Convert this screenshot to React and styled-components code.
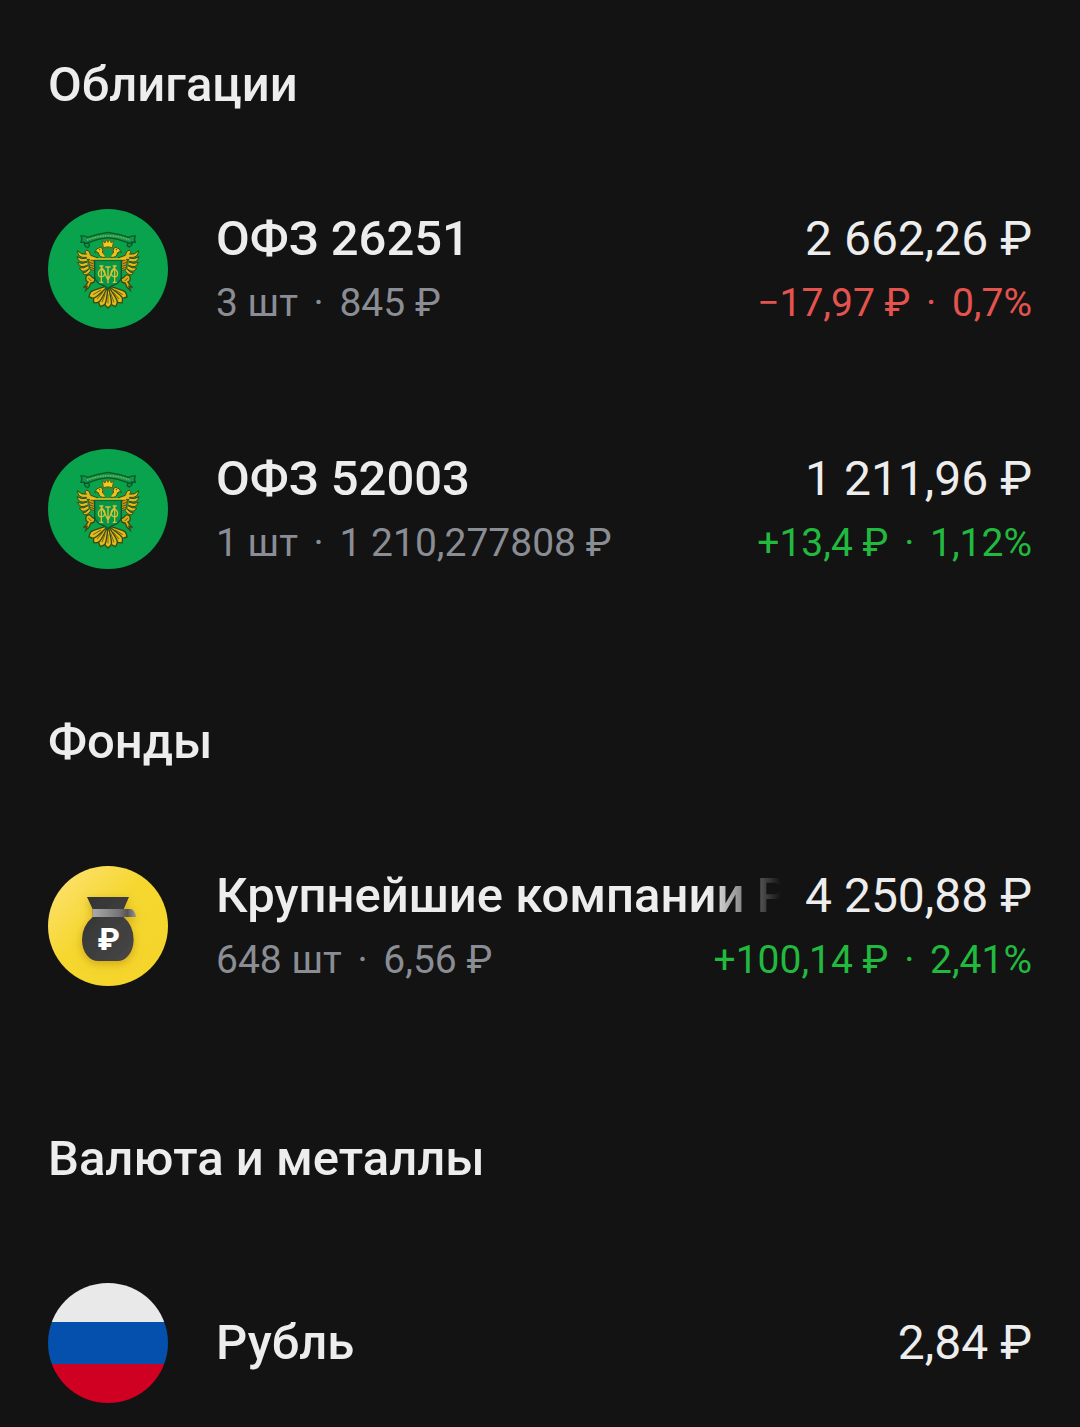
import styled, { createGlobalStyle, css } from "styled-components";

const GlobalStyle = createGlobalStyle`
  * {
    box-sizing: border-box;
  }
  body {
    margin: 0;
    background-color: #131313;
    color: #ededed;
    font-family: Roboto, "Noto Sans", sans-serif;
  }
`;

const Page = styled.main`
  display: flex;
  flex-direction: column;
  gap: 141px;
  padding: 53px 48px 24px;
`;

const Title = styled.h2`
  margin: 0;
  padding-bottom: 92px;
  font-size: 49px;
  font-weight: 500;
  line-height: 64px;
`;

const List = styled.ul`
  display: flex;
  flex-direction: column;
  gap: 120px;
  margin: 0;
  padding: 0;
  list-style: none;
`;

const Row = styled.li`
  display: flex;
  align-items: center;
  gap: 48px;
  height: 120px;

  > svg {
    flex: none;
    width: 120px;
    height: 120px;
  }
`;

const Info = styled.div`
  flex: 1;
  min-width: 0;
`;

const Line = styled.div`
  display: flex;
  justify-content: space-between;
  gap: 24px;
  white-space: nowrap;
  font-size: 49px;
  line-height: 68px;
`;

const SubLine = styled(Line)`
  font-size: 39px;
  line-height: 60px;
`;

const Name = styled.span`
  min-width: 0;
  overflow: hidden;
  font-weight: 500;
  ${({ $fade }) =>
    $fade &&
    css`
      mask-image: linear-gradient(to left, transparent, #000 72px);
    `}
`;

const Value = styled.span`
  flex: none;
  font-size: 48px;
`;

const Muted = styled.span`
  color: #8b8d94;
`;

const Change = styled.span`
  color: ${({ $down }) => ($down ? "#e5534f" : "#22b93f")};
`;

const Dot = styled.span`
  margin: 0 6px;
`;

const feathers = [
  "M139 172 Q114 176 112 152 Q124 166 141 162",
  "M140 184 Q116 192 111 170 Q124 180 141 174",
  "M142 196 Q119 207 113 187 Q126 194 142 186",
  "M146 207 Q126 222 118 204 Q132 206 144 197",
  "M151 214 Q138 232 128 219 Q140 218 148 206",
];

const tail = [-60, -40, -20, 0, 20, 40, 60];

const Wing = () => (
  <g>
    <path
      d="M166 180 L140 178 Q130 158 140 150 Q150 152 152 166 L174 174 Z"
      fill="#dfb91c"
      stroke="#3b4a12"
      strokeWidth="3"
    />
    {feathers.map((d) => (
      <path key={d} d={d} fill="#e6b91d" stroke="#3b4a12" strokeWidth="3" />
    ))}
    <path
      d="M145 178 L162 182 L164 212 L150 208 Z"
      fill="#c79b18"
      stroke="#59520f"
      strokeWidth="3"
    />
    <path
      d="M147 186 l12 5 M148 194 l13 5 M150 202 l12 4"
      stroke="#59520f"
      strokeWidth="3"
    />
    {/* head */}
    <path
      d="M195 172 Q178 174 175 158 Q170 153 164 157 Q168 144 181 142 Q192 145 187 157 Q190 164 199 164 Z"
      fill="#edc51d"
      stroke="#3b4a12"
      strokeWidth="3"
    />
    <circle cx="179" cy="149" r="2" fill="#3b4a12" />
    {/* claw */}
    <path
      d="M139 228 Q148 220 155 230 L165 238 Q164 249 153 249 L147 262 L137 271 L141 259 L130 263 L139 254 L144 246 Q134 242 139 228 Z"
      fill="#d7ae1a"
      stroke="#3b4a12"
      strokeWidth="4"
    />
    <path
      d="M145 234 L154 243"
      fill="none"
      stroke="#59520f"
      strokeWidth="3"
    />
  </g>
);

const EmblemIcon = () => (
  <svg viewBox="24 27 360 360" aria-hidden="true">
    <circle cx="204" cy="207" r="180" fill="#08a34c" />
    {/* ribbon */}
    <path
      d="M123 108 Q136 106 143 112 Q172 101 204 97 Q238 101 267 112 Q275 106 286 108 Q281 117 286 127 L276 126 Q279 137 267 141 Q258 137 264 128 Q233 116 204 113 Q174 116 145 128 Q153 137 143 143 Q132 140 133 127 L123 127 Q128 116 123 108 Z"
      fill="#159347"
      stroke="#075a2c"
      strokeWidth="4"
    />
    <path
      d="M141 120 Q204 95 269 120"
      fill="none"
      stroke="#78b959"
      strokeWidth="5"
      strokeDasharray="3 2"
    />
    <path
      d="M132 129 L146 130 M265 130 L278 129"
      stroke="#075a2c"
      strokeWidth="5"
    />
    <Wing />
    <g transform="translate(408 0) scale(-1 1)">
      <Wing />
    </g>
    {/* tail */}
    {tail.map((a) => (
      <g key={a} transform={`rotate(${a} 204 258)`}>
        <path
          d="M204 256 Q197 284 194 302 Q192 314 198 318 L204 324 L210 318 Q216 314 214 302 Q211 284 204 256 Z"
          fill="#e5bd1b"
          stroke="#3b4a12"
          strokeWidth="4"
        />
        <path d="M204 282 V310" stroke="#75661b" strokeWidth="3" />
      </g>
    ))}
    {/* shield */}
    <path
      d="M164 180 H244 V232 Q240 250 217 257 L204 266 L191 257 Q168 250 164 232 Z"
      fill="#079549"
      stroke="#075a2c"
      strokeWidth="4"
    />
    <path d="M150 177 H258" stroke="#efc81d" strokeWidth="5" />
    <path
      d="M191 148 Q204 142 217 148 V162 Q214 170 204 174 Q193 170 191 162 Z"
      fill="#08a34c"
      stroke="#826e16"
      strokeWidth="2"
    />
    {/* crown */}
    <path
      d="M190 143 L187 122 L195 129 L200 118 L204 127 L209 118 L214 129 L221 122 L217 143 Q204 138 190 143 Z"
      fill="#f3cb1b"
      stroke="#675d13"
      strokeWidth="3"
    />
    {/* monogram */}
    <g fill="none" stroke="#d7c231" strokeWidth="4">
      <path d="M184 198 V247 M224 198 V247" />
      <path d="M184 200 L204 240 L224 200 M204 201 V250" />
      <path d="M184 207 Q171 215 177 228 Q184 234 192 227 Q199 215 188 207 M224 207 Q237 215 231 228 Q224 234 216 227 Q209 215 220 207" />
      <path d="M178 198 H190 M218 198 H230 M178 247 H190 M218 247 H230 M196 201 H212" />
    </g>
  </svg>
);

const BagIcon = () => (
  <svg viewBox="24 24 360 360" aria-hidden="true">
    <defs>
      <linearGradient id="gold" x1="0" y1="0" x2="1" y2="1">
        <stop offset="0" stopColor="#ffe37b" />
        <stop offset="0.45" stopColor="#f5d72f" />
        <stop offset="1" stopColor="#f5d42a" />
      </linearGradient>
      <linearGradient id="bag" x1="0" y1="0" x2="1" y2="1">
        <stop offset="0" stopColor="#333" />
        <stop offset="1" stopColor="#474747" />
      </linearGradient>
      <linearGradient id="strap">
        <stop offset="0" stopColor="#aaa" />
        <stop offset="0.6" stopColor="#777" />
        <stop offset="0.8" stopColor="#555" />
        <stop offset="1" stopColor="#999" />
      </linearGradient>
      <filter id="shadow" x="-30%" y="-30%" width="160%" height="160%">
        <feDropShadow
          dx="0"
          dy="8"
          stdDeviation="14"
          floodColor="#a87400"
          floodOpacity="0.5"
        />
      </filter>
    </defs>
    <circle cx="204" cy="204" r="180" fill="url(#gold)" />
    <g filter="url(#shadow)">
      <path
        d="M141 117 H267 L251 154 V177 Q281 204 281 245 C281 286 255 309 234 309 H174 C151 309 126 286 126 245 Q126 204 158 177 V154 Z"
        fill="url(#bag)"
      />
      <path
        d="M158 153 H270 Q285 154 288 177 H158 Z"
        fill="url(#strap)"
      />
    </g>
    <text
      x="206"
      y="275"
      fill="#fff"
      fontFamily="Roboto, sans-serif"
      fontSize="94"
      fontWeight="800"
      textAnchor="middle"
    >
      ₽
    </text>
  </svg>
);

const FlagIcon = () => (
  <svg viewBox="24 24 360 360" aria-hidden="true">
    <clipPath id="round">
      <circle cx="204" cy="204" r="180" />
    </clipPath>
    <g clipPath="url(#round)">
      <rect x="24" y="24" width="360" height="117" fill="#e9e9e9" />
      <rect x="24" y="141" width="360" height="126" fill="#0450ac" />
      <rect x="24" y="267" width="360" height="117" fill="#d00023" />
    </g>
  </svg>
);

const sections = [
  {
    title: "Облигации",
    items: [
      {
        icon: EmblemIcon,
        name: "ОФЗ 26251",
        value: "2 662,26 ₽",
        info: ["3 шт", "845 ₽"],
        change: ["−17,97 ₽", "0,7%"],
        down: true,
      },
      {
        icon: EmblemIcon,
        name: "ОФЗ 52003",
        value: "1 211,96 ₽",
        info: ["1 шт", "1 210,277808 ₽"],
        change: ["+13,4 ₽", "1,12%"],
      },
    ],
  },
  {
    title: "Фонды",
    items: [
      {
        icon: BagIcon,
        name: "Крупнейшие компании РФ",
        value: "4 250,88 ₽",
        info: ["648 шт", "6,56 ₽"],
        change: ["+100,14 ₽", "2,41%"],
        fade: true,
      },
    ],
  },
  {
    title: "Валюта и металлы",
    items: [{ icon: FlagIcon, name: "Рубль", value: "2,84 ₽" }],
  },
];

const Pair = ({ parts }) => (
  <>
    {parts[0]}
    <Dot> · </Dot>
    {parts[1]}
  </>
);

const Asset = ({ item }) => {
  const Icon = item.icon;
  return (
    <Row>
      <Icon />
      <Info>
        <Line>
          <Name $fade={item.fade}>{item.name}</Name>
          <Value>{item.value}</Value>
        </Line>
        {item.info && (
          <SubLine>
            <Muted>
              <Pair parts={item.info} />
            </Muted>
            <Change $down={item.down}>
              <Pair parts={item.change} />
            </Change>
          </SubLine>
        )}
      </Info>
    </Row>
  );
};

export default function App() {
  return (
    <>
      <GlobalStyle />
      <Page>
        {sections.map((section) => (
          <section key={section.title}>
            <Title>{section.title}</Title>
            <List>
              {section.items.map((item) => (
                <Asset key={item.name} item={item} />
              ))}
            </List>
          </section>
        ))}
      </Page>
    </>
  );
}
